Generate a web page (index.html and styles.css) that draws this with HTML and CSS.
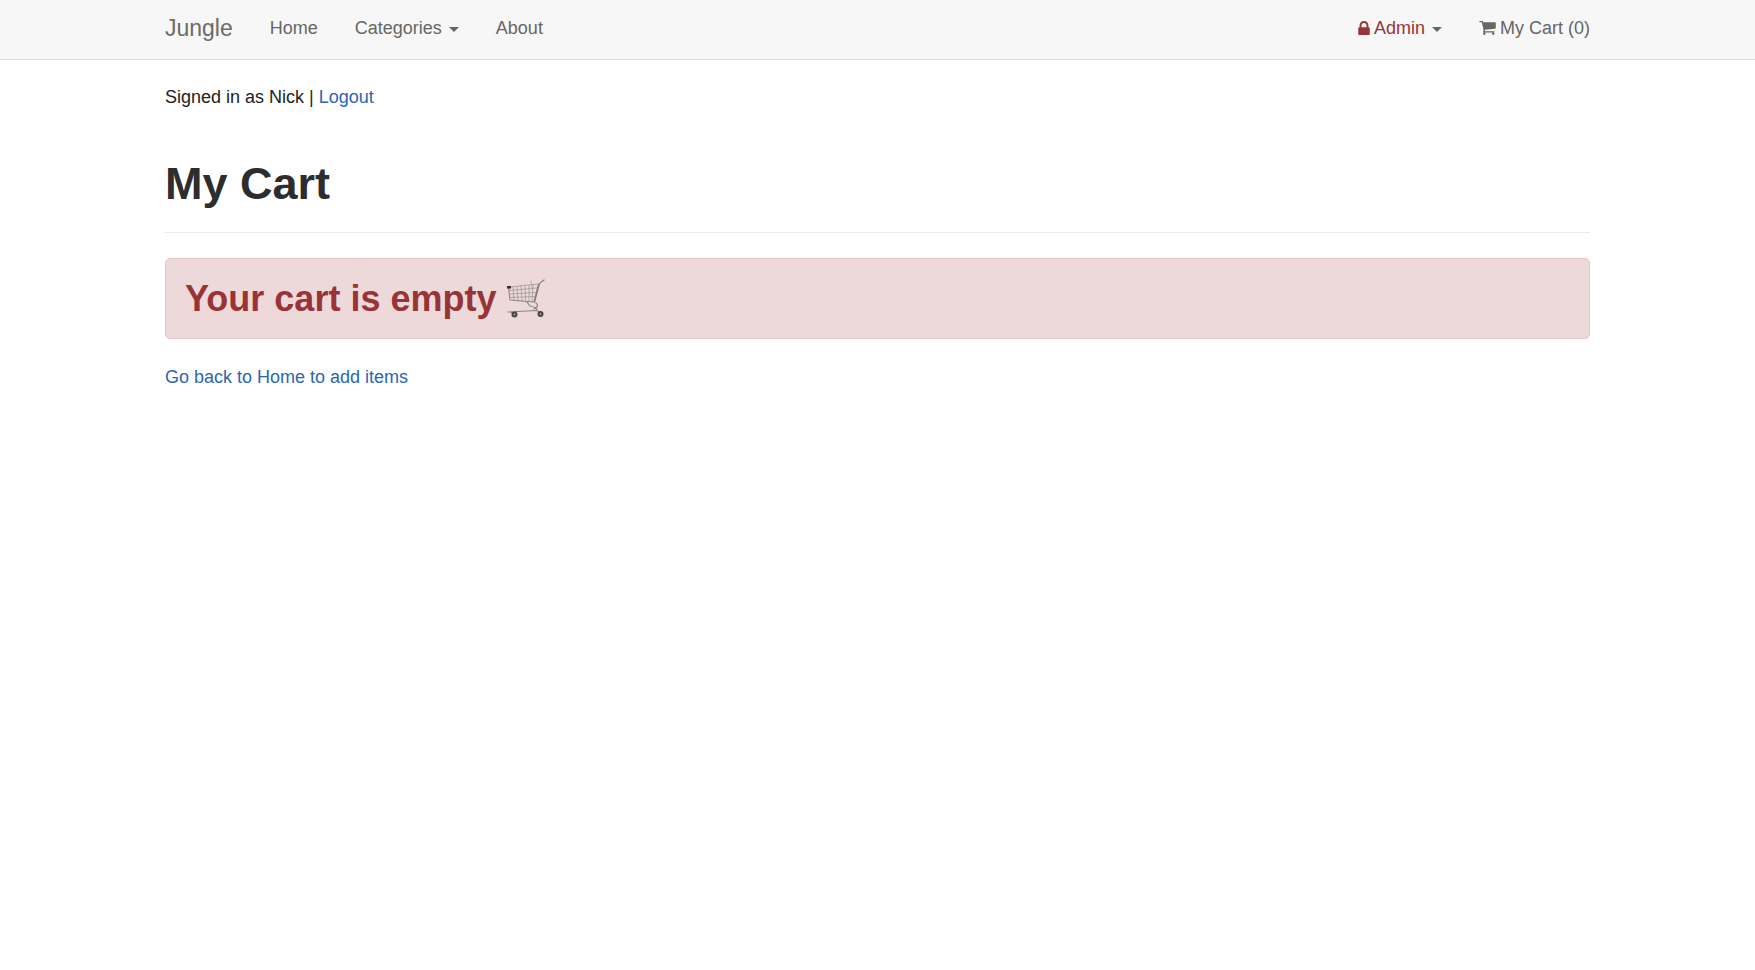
FILE: index.html
```html
<!DOCTYPE html>
<html lang="en">
<head>
<meta charset="utf-8">
<meta name="viewport" content="width=device-width, initial-scale=1">
<title>Jungle - My Cart</title>
<link rel="stylesheet" href="styles.css">
</head>
<body>
<header class="navbar">
  <nav class="container navbar-inner" aria-label="Main">
    <a class="brand" href="#">Jungle</a>
    <ul class="nav-list">
      <li><a class="nav-link" href="#">Home</a></li>
      <li><button class="nav-link" type="button" aria-haspopup="true">Categories<span class="caret"></span></button></li>
      <li><a class="nav-link" href="#">About</a></li>
    </ul>
    <ul class="nav-list nav-right">
      <li><button class="nav-link admin" type="button" aria-haspopup="true"><svg class="icon-lock" viewBox="0 128 1152 1408" aria-hidden="true"><path d="M320 768h512V576q0-106-75-181t-181-75-181 75-75 181v192zm832 96v576q0 40-28 68t-68 28H96q-40 0-68-28t-28-68V864q0-40 28-68t68-28h32V576q0-184 132-316t316-132 316 132 132 316v192h32q40 0 68 28t28 68z"/></svg><span>Admin</span><span class="caret"></span></button></li>
      <li><a class="nav-link" href="#"><svg class="icon-cart" viewBox="64 256 1664 1408" aria-hidden="true"><path d="M704 1536q0 52-38 90t-90 38-90-38-38-90 38-90 90-38 90 38 38 90zm896 0q0 52-38 90t-90 38-90-38-38-90 38-90 90-38 90 38 38 90zm128-1088v512q0 24-16.500 42.500t-40.500 21.500l-1044 122q13 60 13 70 0 16-24 64h920q26 0 45 19t19 45-19 45-45 19h-1024q-26 0-45-19t-19-45q0-11 8-31.500t16-36 21.500-40 15.500-29.500l-177-823h-204q-26 0-45-19t-19-45 19-45 45-19h256q16 0 28.500 6.500t19.500 15.500 13 24.500 8 26 5.500 29.500 4.500 26h1201q26 0 45 19t19 45z"/></svg><span>My Cart (0)</span></a></li>
    </ul>
  </nav>
</header>
<main class="container">
  <p class="session">Signed in as Nick | <a href="#">Logout</a></p>
  <h1 class="page-title">My Cart</h1>
  <section class="alert">
    <h2 class="alert-title">Your cart is empty
      <svg class="trolley" viewBox="0 0 40 40" role="img" aria-label="Shopping cart">
        <g fill="none" stroke-linecap="round" stroke-linejoin="round">
          <path d="M3 8L32 5M3.500 11.500L31 9M4 15L29.500 13.500M4 18.500L28.500 17.500M7 8L8 21M11 7.500L12 22M15 7L16 22M19 7L19.500 22.500M23 6.500L23 22.500M27 6L26 22.500" stroke="#a09898" stroke-width=".8"/>
          <path d="M2.500 8L4 21L28 23L32.500 5" stroke="#8a8484" stroke-width="1.100"/>
          <path d="M25 2L26 9" stroke="#b5a9aa" stroke-width="1"/>
          <path d="M38 1Q34 3 33 6L28.500 23" stroke="#827c7c" stroke-width="1.300"/>
          <path d="M21 23L24 27Q30 28 31 31M30 24Q34 27 28 30" stroke="#8a8484" stroke-width="1.200"/>
          <path d="M2 33L30 31.500L35 33M5 33.500L9 34" stroke="#8a8484" stroke-width="1.200"/>
        </g>
        <rect x="1" y="7" width="4" height="2.500" fill="#26303f"/>
        <circle cx="8.500" cy="35.500" r="3" fill="#484545"/><circle cx="8.500" cy="35.500" r="1" fill="#aaa3a3"/>
        <circle cx="34.500" cy="35" r="3" fill="#484545"/><circle cx="34.500" cy="35" r="1" fill="#aaa3a3"/>
      </svg>
    </h2>
  </section>
  <a href="#">Go back to Home to add items</a>
</main>
</body>
</html>
```
FILE: styles.css
```css
* {
  box-sizing: border-box;
}

body {
  margin: 0;
  background: #fff;
  color: #222;
  font: 18px/26px "Liberation Sans", Arial, sans-serif;
}

a {
  color: #2b66b1;
  text-decoration: none;
}

a:hover {
  text-decoration: underline;
}

.container {
  width: 100%;
  max-width: 1463px;
  margin: 0 auto;
  padding: 0 19px;
}

.navbar {
  background: #f7f7f7;
  border-bottom: 1px solid #e0e0e0;
}

.navbar-inner {
  display: flex;
  align-items: center;
  gap: 37px;
  padding-top: 15px;
  padding-bottom: 18px;
}

.brand {
  color: #6b6b6b;
  font-size: 23px;
}

.nav-list {
  display: flex;
  gap: 37px;
  margin: 0;
  padding: 0;
  list-style: none;
}

.nav-right {
  margin-left: auto;
}

.nav-link {
  display: flex;
  align-items: center;
  padding: 0;
  border: 0;
  background: none;
  color: #666;
  font: inherit;
  cursor: pointer;
}

.admin {
  color: #993436;
}

.caret {
  margin: 3px 0 0 7px;
  border: 5px solid transparent;
  border-top-color: #666;
  border-bottom: 0;
}

.icon-lock,
.icon-cart {
  height: 14px;
  margin-right: 4px;
  fill: currentColor;
}

.icon-lock {
  width: 12px;
}

.icon-cart {
  width: 17px;
}

.session {
  margin: 24px 0 0;
}

.page-title {
  margin: 48px 0 25px;
  padding-bottom: 22px;
  border-bottom: 1px solid #eaeaea;
  color: #2d2d2d;
  font-size: 45px;
  line-height: 52px;
}

.alert {
  margin-bottom: 25px;
  padding: 20px 19px 19px;
  border: 1px solid #e5c4ca;
  border-radius: 5px;
  background: #eed9da;
}

.alert-title {
  display: flex;
  align-items: center;
  gap: 10px;
  margin: 0;
  color: #993436;
  font-size: 36px;
  line-height: 40px;
}

.trolley {
  width: 40px;
  height: 40px;
}
```
